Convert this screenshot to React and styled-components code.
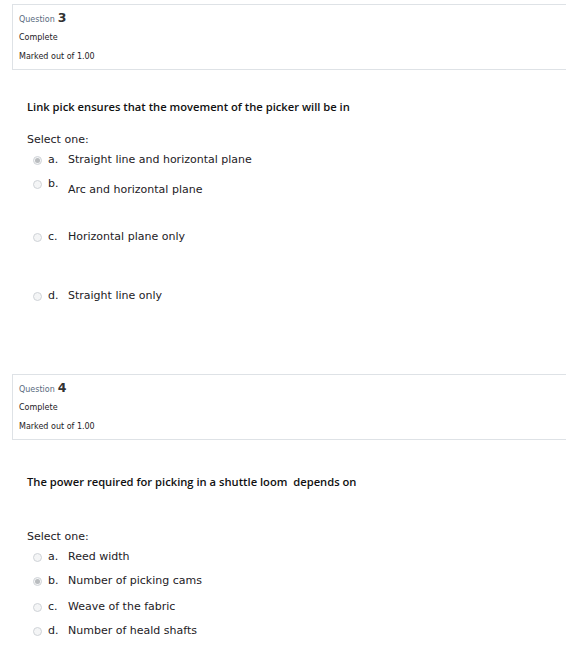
import React from "react";
import styled, { createGlobalStyle } from "styled-components";

const Global = createGlobalStyle`
  html, body { margin: 0; padding: 0; background: #fff; overflow-x: hidden; }
  body { font-family: "DejaVu Sans", "Open Sans", sans-serif; color: #1d2125; }
`;

const Page = styled.div`
  padding: 4px 0 20px 12px;
  width: 566px;
  box-sizing: border-box;
`;

const Question = styled.section`
  display: flex;
  flex-direction: column;
  margin-bottom: ${(p) => p.$gap || 0}px;
`;

const Info = styled.div`
  border: 1px solid #dee2e6;
  border-right: none;
  margin-right: -20px;
  padding: 4px 8px 3px 6px;
  display: flex;
  flex-direction: column;
  background: #fff;
`;

const QNo = styled.h3`
  margin: 0;
  font-size: 8px;
  font-weight: 400;
  color: #5a6a7e;
  line-height: 18px;
  height: 18px;
  display: flex;
  align-items: baseline;
  gap: 3px;
  span { font-size: 12.5px; font-weight: 700; color: #333; }
`;

const Meta = styled.div`
  font-size: 8px;
  line-height: 18px;
  color: #1d2125;
  margin-top: ${(p) => p.$mt || 0}px;
`;

const Content = styled.div`
  padding: ${(p) => p.$top}px 0 0 15px;
`;

const Prompt = styled.div`
  font-family: "Open Sans", "DejaVu Sans", sans-serif;
  font-size: 11.2px;
  font-weight: 600;
  line-height: 16px;
  color: #111;
  white-space: pre-wrap;
  margin-bottom: ${(p) => p.$after}px;
`;

const SelectOne = styled.div`
  font-size: 11px;
  line-height: 16px;
  color: #1d2125;
  margin-bottom: 4px;
`;

const Options = styled.div`
  display: flex;
  flex-direction: column;
  padding-left: 6px;
`;

const Option = styled.label`
  display: flex;
  align-items: flex-start;
  font-size: 11px;
  line-height: 16px;
  margin-bottom: ${(p) => p.$after}px;
`;

const Radio = styled.span`
  width: 9px;
  height: 9px;
  margin-top: 3.5px;
  border-radius: 50%;
  border: 1px solid #cfd3d7;
  background: #f4f5f6;
  box-sizing: border-box;
  display: flex;
  align-items: center;
  justify-content: center;
  flex: none;
  &::after {
    content: "";
    width: 5px;
    height: 5px;
    border-radius: 50%;
    background: ${(p) => (p.$checked ? "#b9bcbf" : "transparent")};
  }
`;

const Letter = styled.span`
  width: 20px;
  padding-left: 6px;
  flex: none;
`;

const Answer = styled.span`
  margin-top: ${(p) => p.$drop || 0}px;
`;

const q1 = [
  { l: "a.", t: "Straight line and horizontal plane", checked: true, after: 8 },
  { l: "b.", t: "Arc and horizontal plane", drop: 6, after: 31 },
  { l: "c.", t: "Horizontal plane only", after: 43 },
  { l: "d.", t: "Straight line only", after: 0 },
];
const q2 = [
  { l: "a.", t: "Reed width", after: 8 },
  { l: "b.", t: "Number of picking cams", checked: true, after: 10 },
  { l: "c.", t: "Weave of the fabric", after: 8 },
  { l: "d.", t: "Number of heald shafts", after: 0 },
];

function Block({ no, prompt, opts, top, promptAfter, gap }) {
  return (
    <Question $gap={gap}>
      <Info>
        <QNo>
          Question <span>{no}</span>
        </QNo>
        <Meta $mt={2}>Complete</Meta>
        <Meta $mt={1}>Marked out of 1.00</Meta>
      </Info>
      <Content $top={top}>
        <Prompt $after={promptAfter}>{prompt}</Prompt>
        <SelectOne>Select one:</SelectOne>
        <Options>
          {opts.map((o) => (
            <Option key={o.l} $after={o.after}>
              <Radio $checked={o.checked} />
              <Letter>{o.l}</Letter>
              <Answer $drop={o.drop}>{o.t}</Answer>
            </Option>
          ))}
        </Options>
      </Content>
    </Question>
  );
}

export default function App() {
  return (
    <>
      <Global />
      <Page>
        <Block
          no="3"
          prompt="Link pick ensures that the movement of the picker will be in"
          opts={q1}
          top={29}
          promptAfter={17}
          gap={70}
        />
        <Block
          no="4"
          prompt="The power required for picking in a shuttle loom  depends on"
          opts={q2}
          top={34}
          promptAfter={39}
        />
      </Page>
    </>
  );
}
